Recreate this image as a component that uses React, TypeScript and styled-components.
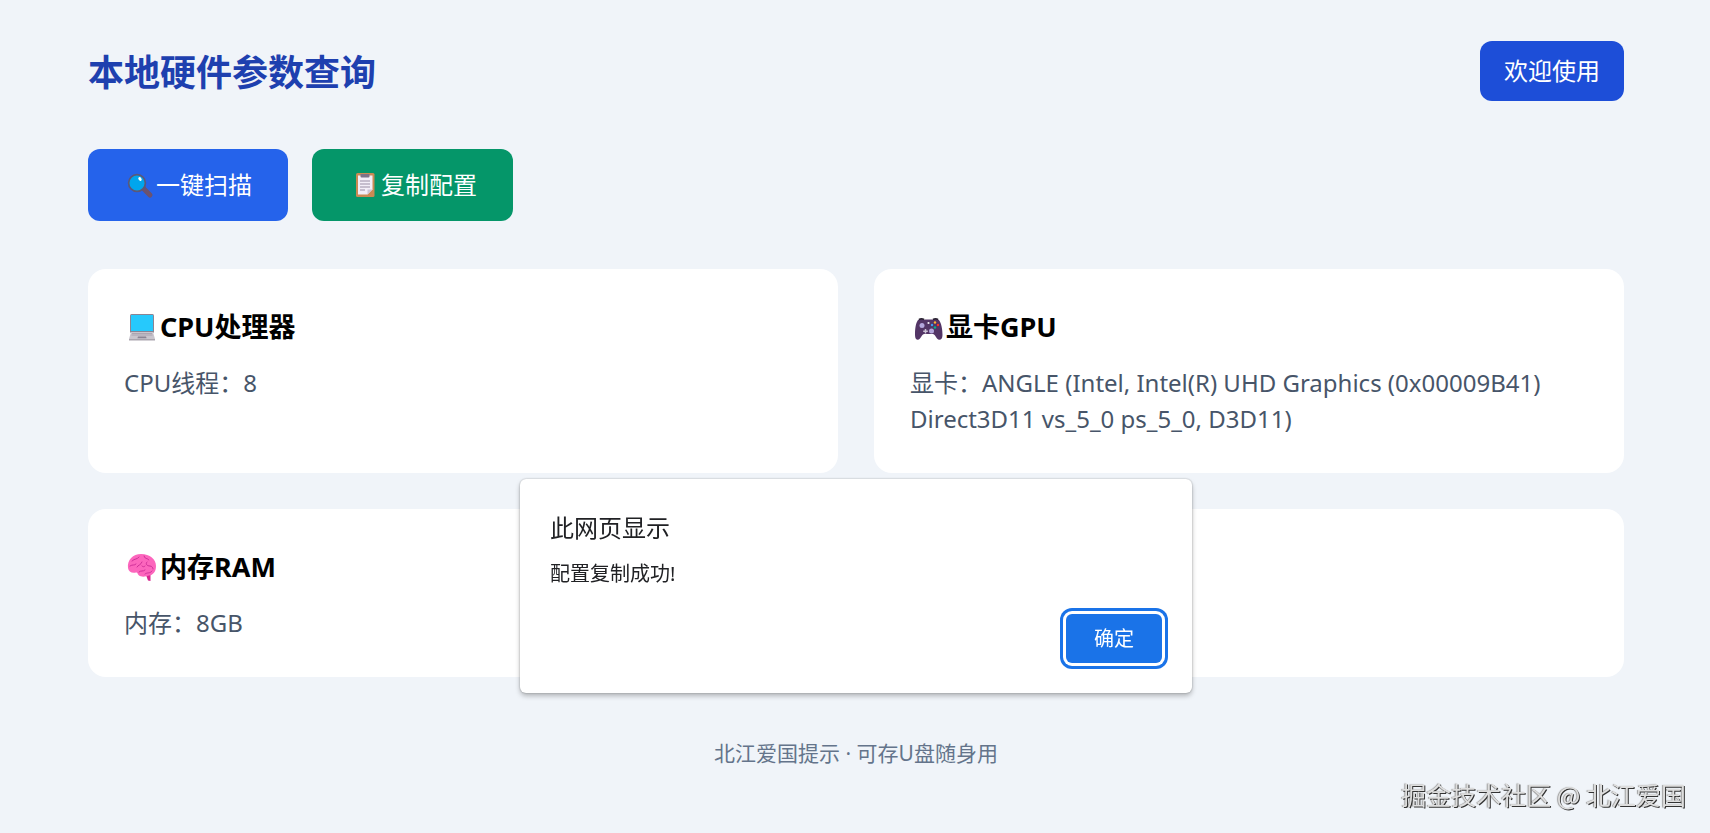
import React, { useState } from 'react';
import styled, { createGlobalStyle } from 'styled-components';

const GlobalStyle = createGlobalStyle`
  * { box-sizing: border-box; }
  html { background: #f0f4f9; }
  body {
    margin: 0;
    font-family: 'Noto Sans', 'Noto Sans CJK SC', sans-serif;
    font-size: 24px;
    line-height: 36px;
    color: #000;
  }
  h1, h2, p { margin: 0; }
  button { font-family: inherit; border: 0; color: #fff; cursor: pointer; }
`;

const Page = styled.div`
  padding: 41px 86px 0 88px;
`;

const Header = styled.header`
  display: flex;
  justify-content: space-between;
  align-items: center;
`;

const Title = styled.h1`
  padding-top: 4px;
  font-size: 36px;
  line-height: 54px;
  font-weight: 700;
  color: #1e40af;
`;

const Button = styled.button<{ $bg: string; $large?: boolean }>`
  display: inline-flex;
  align-items: center;
  padding: ${(p) => (p.$large ? '18px 36px' : '12px 24px')};
  border-radius: 12px;
  background: ${(p) => p.$bg};
  font-size: 24px;
  line-height: 36px;
`;

const Actions = styled.div`
  display: flex;
  gap: 24px;
  margin: 48px 0;
`;

const Grid = styled.main`
  display: grid;
  grid-template-columns: 1fr 1fr;
  gap: 36px;
`;

const Card = styled.section`
  padding: 36px;
  border-radius: 18px;
  background: #fff;
`;

const CardTitle = styled.h2`
  display: flex;
  align-items: center;
  margin-bottom: 16px;
  font-size: 27px;
  line-height: 44px;
  font-weight: 700;
`;

const CardText = styled.p`
  color: #475569;
`;

const Footer = styled.footer`
  margin-top: 60px;
  text-align: center;
  font-size: 21px;
  line-height: 32px;
  color: #64748b;
`;

const Icon = styled.svg`
  flex: none;
`;

const Alert = styled.dialog`
  position: fixed;
  top: 479px;
  left: 2px;
  right: 0;
  width: 672px;
  margin: 0 auto;
  padding: 31px 30px 30px;
  border: 0;
  border-radius: 6px;
  background: #fff;
  box-shadow: 0 0 2px rgba(0, 0, 0, 0.3), 0 3px 5px rgba(0, 0, 0, 0.25);
  color: #202124;
`;

const AlertTitle = styled.p`
  margin-bottom: 13px;
`;

const AlertText = styled.p`
  margin-bottom: 25px;
  font-size: 20px;
  line-height: 30px;
`;

const AlertActions = styled.div`
  display: flex;
  justify-content: flex-end;
`;

const ConfirmButton = styled.button`
  padding: 10px 28px 9px;
  border-radius: 6px;
  background: #1a73e8;
  box-shadow: 0 0 0 3px #fff, 0 0 0 6px #1a73e8;
  font-size: 20px;
  line-height: 30px;
  outline: 0;
`;

const Watermark = styled.div`
  position: fixed;
  right: 24px;
  bottom: 21px;
  font-family: 'Noto Sans CJK SC', sans-serif;
  font-size: 25px;
  line-height: 36px;
  color: #dedede;
  text-shadow: 1px 1px 0 #333, -1px 0 1px #999;
`;

const SearchIcon = () => (
  <Icon width="32" height="28" viewBox="0 0 32 28" aria-hidden="true">
    <path d="M19 17l7 7" stroke="#6b5270" strokeWidth="5" strokeLinecap="round" />
    <circle cx="13" cy="12" r="8.4" fill="#00a6ed" stroke="#5b5878" strokeWidth="1.7" />
    <ellipse cx="16" cy="8" rx="1.5" ry="2" transform="rotate(-35 16 8)" fill="#fff" />
  </Icon>
);

const ClipboardIcon = () => (
  <Icon width="33" height="28" viewBox="0 0 33 28" aria-hidden="true">
    <rect x="8" y="2" width="18.500" height="24" rx="1.500" fill="#ca8a54" />
    <path d="M10 4.500h14.500v14l-5 5H10z" fill="#f3eef8" />
    <path d="M24.500 18.500l-5 5v-5z" fill="#cdc4d6" />
    <path d="M12 10h10M12 13h10M12 16h10M12 19h5" stroke="#998ea4" />
    <path d="M12.500 3h9v2.500a1 1 0 0 1-1 1h-7a1 1 0 0 1-1-1z" fill="#7d7389" />
  </Icon>
);

const LaptopIcon = () => (
  <Icon width="36" height="32" viewBox="0 0 36 32" aria-hidden="true">
    <rect x="6" y="3" width="24" height="19" rx="1.500" fill="#8b8493" />
    <rect x="7" y="4" width="22" height="16" fill="#26c9fc" />
    <path d="M7 21h22l2 7H5z" fill="#c9c5cd" />
    <path d="M8 22.500h20M7.500 24h21" stroke="#a39da9" strokeWidth="0.800" />
    <path d="M14 25.500h8l.6 1.700h-9.200z" fill="#8b8493" />
    <path d="M5 28h26v1.500H5z" fill="#aaa5ae" />
  </Icon>
);

const GamepadIcon = () => (
  <Icon width="36" height="32" viewBox="0 0 36 32" aria-hidden="true">
    <path d="M8 9c2-1.500 4-1.500 6-.5h9c2-1 4-1 6 .5 2.500 3.500 3.500 9.500 3.500 15 0 5-3.500 6-5.500 3.500-1.500-2-2.500-4.500-4-4.500h-9c-1.500 0-2.500 2.500-4 4.500C8 30 5 29 5 24c0-5.500.5-11.500 3-15z" fill="#533566" />
    <path d="M9 8.500q2.500-1.500 5 0M23 8.500q2.500-1.500 5 0" stroke="#28212f" strokeWidth="1.500" fill="none" />
    <circle cx="12" cy="14.500" r="2.500" fill="#b4a7dc" />
    <circle cx="21.500" cy="20" r="2.500" fill="#b4a7dc" />
    <path d="M15.500 18v4.500M13.200 20.200h4.600" stroke="#cdc4d6" strokeWidth="1.500" />
    <circle cx="18.500" cy="12" r="1.100" fill="#f4f0f7" />
    <circle cx="25" cy="11.500" r="1.200" fill="#ffb02e" />
    <circle cx="22" cy="14" r="1.200" fill="#3f9cf2" />
    <circle cx="28" cy="14" r="1.200" fill="#f8312f" />
    <circle cx="25" cy="16.500" r="1.200" fill="#00b58a" />
  </Icon>
);

const BrainIcon = () => (
  <Icon width="36" height="32" viewBox="0 0 36 32" aria-hidden="true">
    <path d="M22 24l2 5.500 2.500.5V22z" fill="#d8268f" />
    <path d="M4 17C3 9 9 3 17 3c9 0 15 5 15 12 0 6-3 9-7 9.500-4 1.500-8 1.500-10 0-2-2-1-3-3-3-4 1-7.500-.5-8-4.500z" fill="#fc66bd" />
    <path d="M8 10c3-3 5-1 7-4m5-1c0 3 4 2 5 4M6 15c3-2 4 0 6-2m6-2c-1 3-4 3-5 5m10-5c-2 2 0 4 3 4 2 0 3 2 3 3M15 21c2-2 4 0 6-2m0 4c2-2 5 0 7-3M21 15c-1 1-2 1-3 0" stroke="#cf3099" strokeWidth="1" strokeLinecap="round" fill="none" />
  </Icon>
);

export default function App() {
  const [open, setOpen] = useState(true);
  return (
    <>
      <GlobalStyle />
      <Page>
        <Header>
          <Title>本地硬件参数查询</Title>
          <Button $bg="#1d4ed8">欢迎使用</Button>
        </Header>
        <Actions>
          <Button $bg="#2563eb" $large><SearchIcon />一键扫描</Button>
          <Button $bg="#059669" $large onClick={() => setOpen(true)}><ClipboardIcon />复制配置</Button>
        </Actions>
        <Grid>
          <Card>
            <CardTitle><LaptopIcon />CPU处理器</CardTitle>
            <CardText>CPU线程：8</CardText>
          </Card>
          <Card>
            <CardTitle><GamepadIcon />显卡GPU</CardTitle>
            <CardText>显卡：ANGLE (Intel, Intel(R) UHD Graphics (0x00009B41) Direct3D11 vs_5_0 ps_5_0, D3D11)</CardText>
          </Card>
          <Card>
            <CardTitle><BrainIcon />内存RAM</CardTitle>
            <CardText>内存：8GB</CardText>
          </Card>
          <Card />
        </Grid>
        <Footer>北江爱国提示 · 可存U盘随身用</Footer>
      </Page>
      <Alert open={open} aria-labelledby="alert-title">
        <AlertTitle id="alert-title">此网页显示</AlertTitle>
        <AlertText>配置复制成功!</AlertText>
        <AlertActions>
          <ConfirmButton onClick={() => setOpen(false)}>确定</ConfirmButton>
        </AlertActions>
      </Alert>
      <Watermark>掘金技术社区 @ 北江爱国</Watermark>
    </>
  );
}
